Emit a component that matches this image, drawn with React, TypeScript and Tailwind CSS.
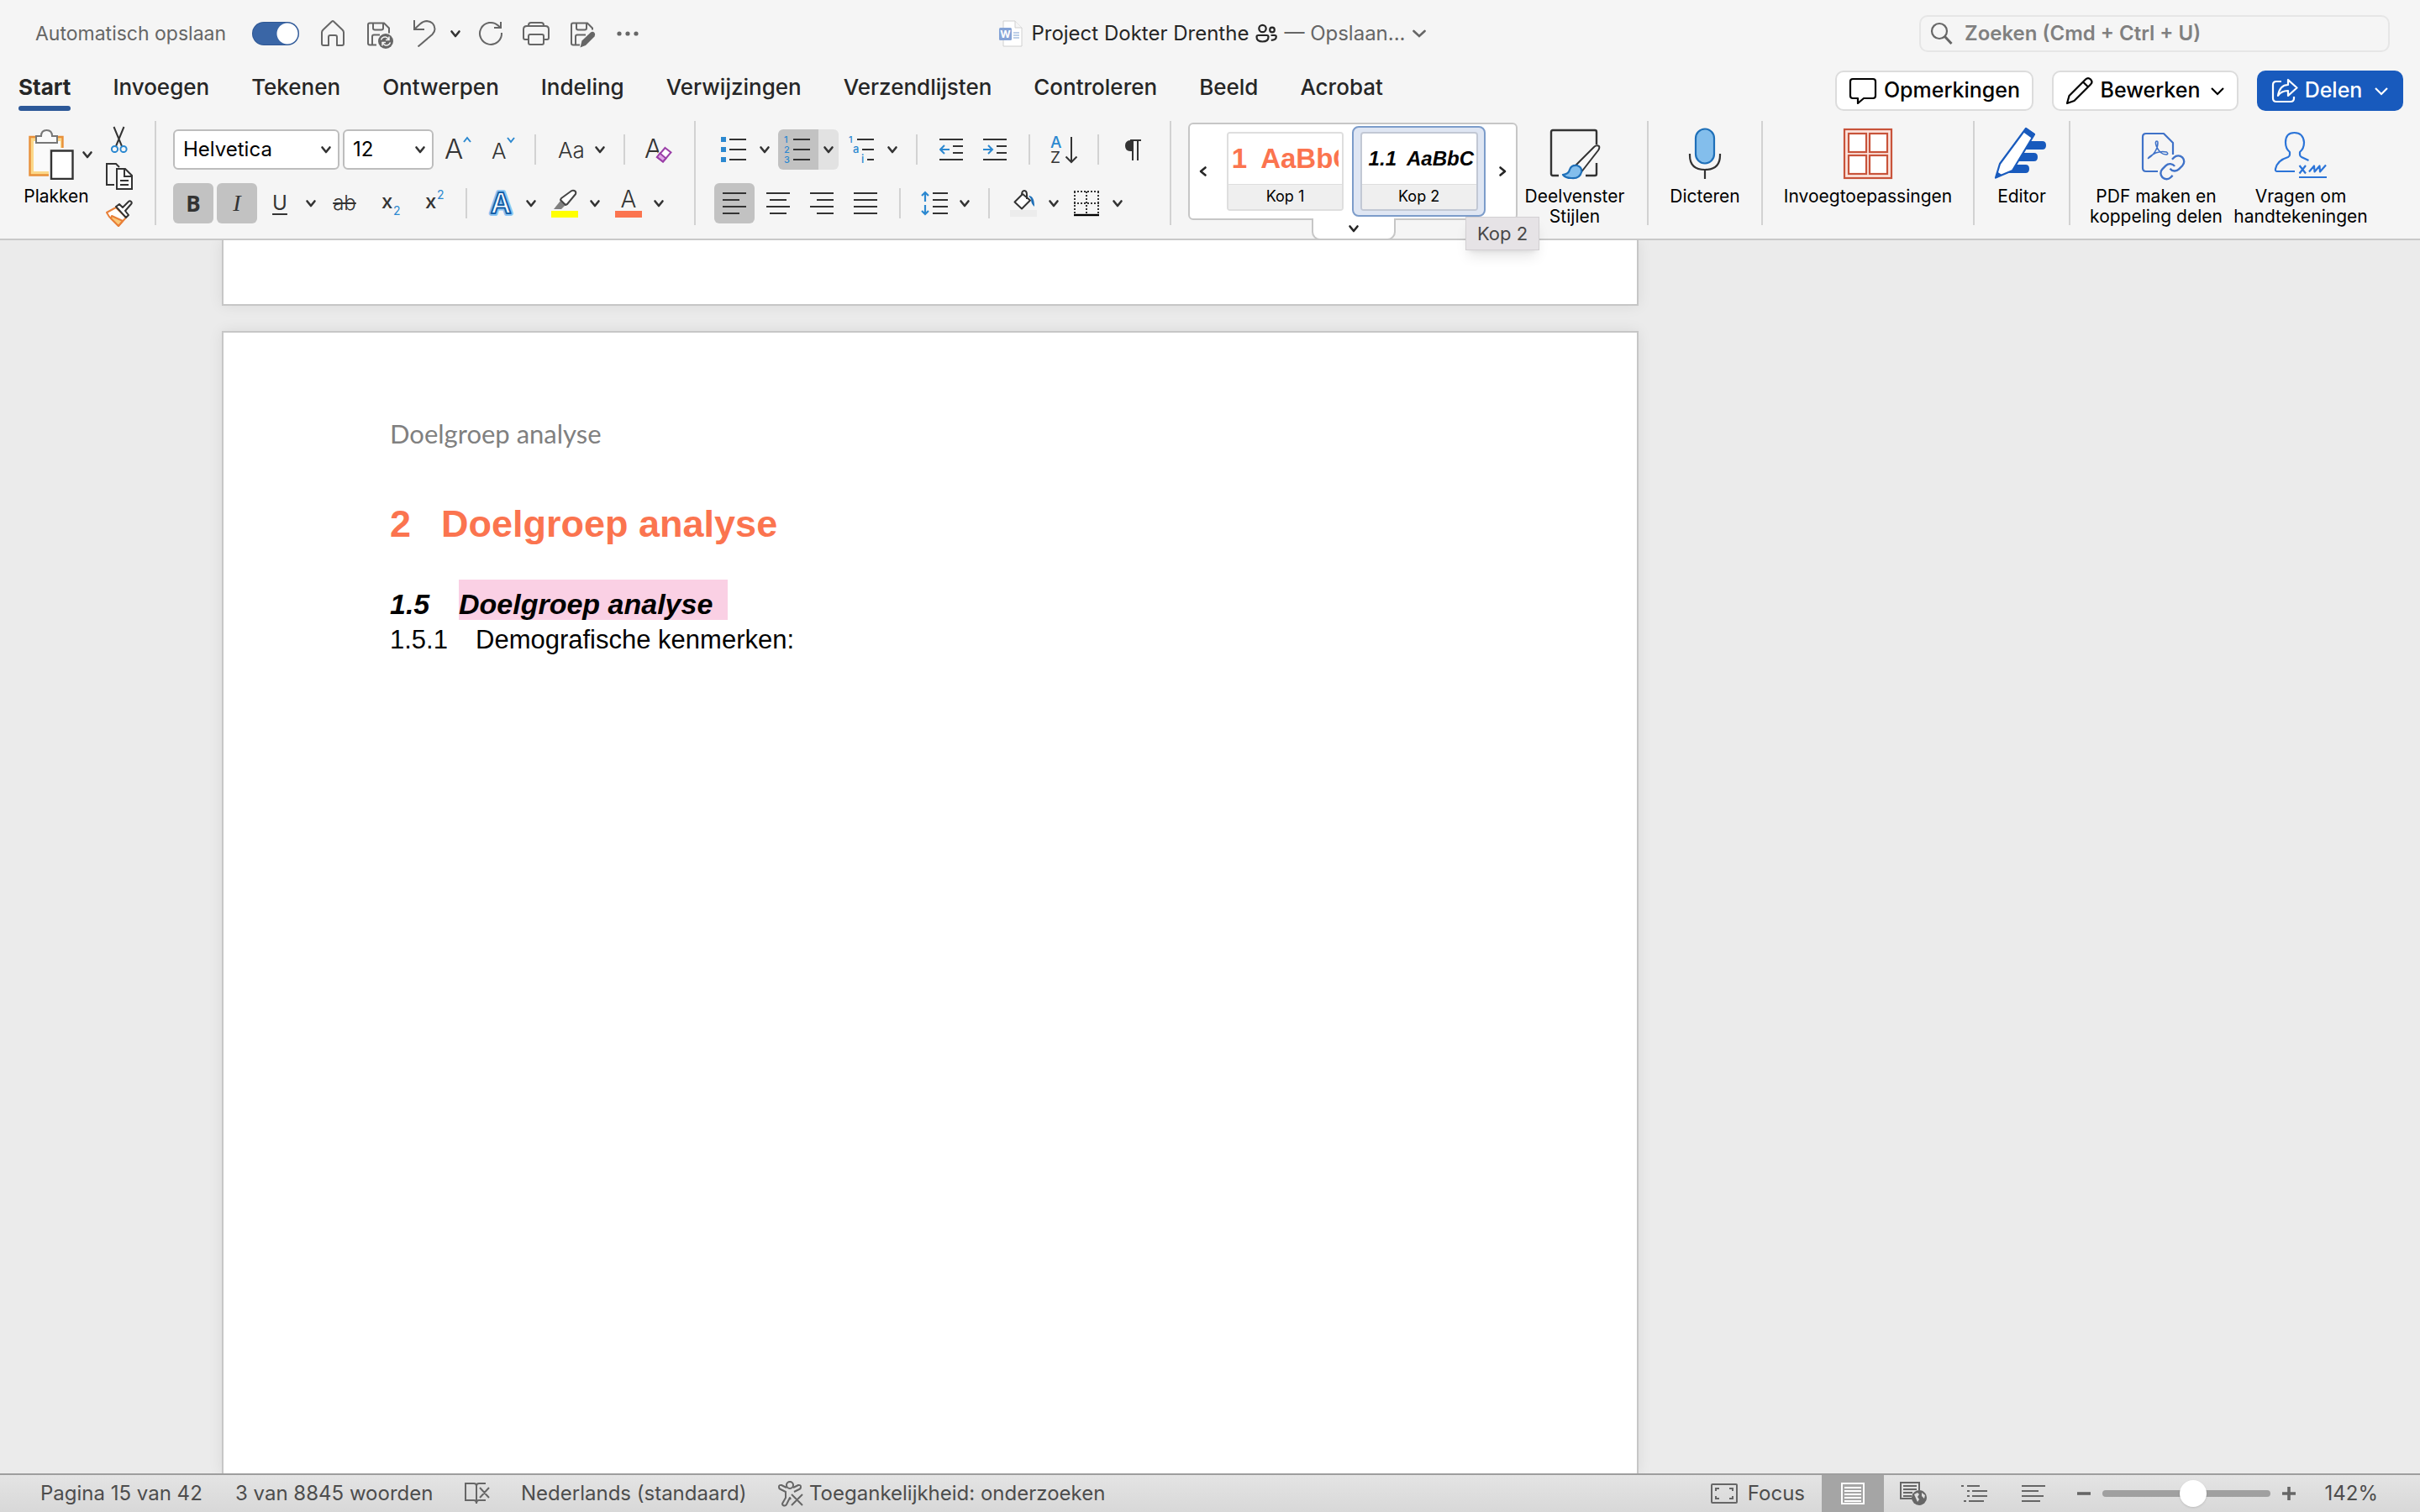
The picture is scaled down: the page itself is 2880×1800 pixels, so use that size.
import type { ReactNode } from 'react';

const tabs = ['Start', 'Invoegen', 'Tekenen', 'Ontwerpen', 'Indeling', 'Verwijzingen', 'Verzendlijsten', 'Controleren', 'Beeld', 'Acrobat'];

function Chevron({ className = '' }: { className?: string }) {
  return (
    <svg viewBox="0 0 16 16" className={`size-4 shrink-0 ${className}`} fill="none" stroke="currentColor" strokeWidth="2.6" strokeLinecap="round" strokeLinejoin="round">
      <path d="M3.5 5.5 8 11l4.5-5.5" />
    </svg>
  );
}

function Tool({ label, className = '', children }: { label: string; className?: string; children: ReactNode }) {
  return (
    <button type="button" aria-label={label} className={`flex h-12 shrink-0 items-center justify-center ${className}`}>
      {children}
    </button>
  );
}

function Drop({ label, className = '' }: { label: string; className?: string }) {
  return (
    <button type="button" aria-label={label} className={`flex h-12 w-4 shrink-0 items-center justify-center ${className}`}>
      <Chevron />
    </button>
  );
}

function Divider({ className = '' }: { className?: string }) {
  return <div className={`h-9 w-0.5 shrink-0 bg-[#d2d2d2] ${className}`} />;
}

function GroupDivider({ className = '' }: { className?: string }) {
  return <div className={`h-[124px] w-0.5 shrink-0 bg-[#d2d2d2] ${className}`} />;
}

function BigTool({ label, className = '', children }: { label: string; className?: string; children: ReactNode }) {
  return (
    <button type="button" className={`flex shrink-0 flex-col items-center gap-2 pt-2 text-[21px] leading-6 text-black ${className}`}>
      {children}
      <span className="text-center whitespace-pre">{label}</span>
    </button>
  );
}

function Lines({ rows }: { rows: [number, number][] }) {
  return (
    <svg viewBox="0 0 28 28" className="size-7" stroke="#333" strokeWidth="2">
      {rows.map(([from, to], i) => (
        <path key={i} d={`M${from} ${2 + i * 8}H${to}`} />
      ))}
    </svg>
  );
}

function TitleBar() {
  return (
    <div className="grid h-20 grid-cols-[1fr_auto_1fr] items-center pr-9 pl-[42px] text-[#666]">
      <div className="flex items-center">
        <label className="flex w-[314px] items-center justify-between text-[23px] whitespace-nowrap">
          Automatisch opslaan
          <input
            type="checkbox"
            role="switch"
            defaultChecked
            className="h-7 w-14 appearance-none rounded-full bg-[#3a66a6] bg-[radial-gradient(circle_at_42px_14px,white_12px,transparent_13px)] ring-1 ring-[#2f5793] ring-inset"
          />
        </label>
        <button type="button" aria-label="Start" className="ml-[26px]">
          <svg viewBox="0 0 28 32" className="h-8 w-7" fill="none" stroke="currentColor" strokeWidth="2" strokeLinejoin="round">
            <path d="M13 1.5q1-.9 2 0L25.500 11.500q1.500 1.500 1.500 3V28q0 2-2 2h-6V20q0-2-2-2h-6q-2 0-2 2v10H3q-2 0-2-2V14.500q0-1.500 1.500-3Z" />
          </svg>
        </button>
        <button type="button" aria-label="Opslaan" className="ml-[26px]">
          <svg viewBox="0 -1.5 32 32" className="size-8 overflow-visible" fill="none" stroke="currentColor" strokeWidth="2">
            <path d="M12 28H4q-2 0-2-2V4q0-2 2-2h17l6 6v6M8 2v6q0 2 2 2h8q2 0 2-2V2M7 28V18q0-2 2-2h7" />
            <circle cx="23" cy="23.500" r="9" fill="currentColor" stroke="none" />
            <path d="M17.500 22q1.500-4 5.500-3.500 2 .3 3.500 3m.5-3.500v4h-4M28.500 25q-1.500 4-5.500 3.500-2-.3-3.500-3M19 29v-4h4" stroke="#f5f5f5" strokeWidth="1.500" />
          </svg>
        </button>
        <button type="button" aria-label="Ongedaan maken" className="ml-6">
          <svg viewBox="0 0 28 32" className="h-8 w-7" fill="none" stroke="currentColor" strokeWidth="2">
            <path d="M1 0v11h12M1.500 10.500 8 4.500q4-3.500 8-3.500 9 1 9.500 9.500 0 3.500-3 6.500L5.500 31.500" />
          </svg>
        </button>
        <button type="button" aria-label="Meer ongedaan maken" className="ml-3.5 text-[#333]">
          <Chevron />
        </button>
        <button type="button" aria-label="Opnieuw" className="ml-5">
          <svg viewBox="0 0 28 28" className="size-7 overflow-visible" fill="none" stroke="currentColor" strokeWidth="2">
            <path d="M27 13A13 13 0 1 1 23 4.500L25.500 7M26 0v7h-8" />
          </svg>
        </button>
        <button type="button" aria-label="Afdrukken" className="ml-6">
          <svg viewBox="0 0 32 28" className="h-7 w-8" fill="none" stroke="currentColor" strokeWidth="2" strokeLinejoin="round">
            <path d="M7 21H3q-2 0-2-2V9q0-4 4-4h22q4 0 4 4v10q0 2-2 2h-4M7 5V4q0-3 3-3h12q3 0 3 3v1" />
            <rect x="7" y="15" width="18" height="12" rx="2" />
          </svg>
        </button>
        <button type="button" aria-label="Opslaan als" className="ml-6">
          <svg viewBox="0 -1.5 32 32" className="size-8 overflow-visible" fill="none" stroke="currentColor" strokeWidth="2">
            <path d="M12 28H4q-2 0-2-2V4q0-2 2-2h17l6 6v2M8 2v6q0 2 2 2h8q2 0 2-2V2M7 28V18q0-2 2-2h10" />
            <path d="m12.500 31 2-8L25 13q2.500-1.500 4.500.5 1.500 2 0 4.500L19 28.500Z" fill="currentColor" stroke="none" />
          </svg>
        </button>
        <button type="button" aria-label="Meer" className="ml-6">
          <svg viewBox="0 0 26 26" className="size-[26px]" fill="currentColor">
            <circle cx="3" cy="13" r="2.600" />
            <circle cx="13" cy="13" r="2.600" />
            <circle cx="23" cy="13" r="2.600" />
          </svg>
        </button>
      </div>

      <div className="flex items-center gap-2 text-2xl whitespace-nowrap">
        <svg viewBox="0 0 28 32" className="mr-0.5 h-8 w-7">
          <path d="M5 1h14l8 8v22H5Z" fill="#fff" stroke="#d0d0d0" />
          <path d="M19 1v8h8" fill="#f5f5f5" stroke="#d0d0d0" />
          <path d="M17 15h7M17 18h7M17 21h7" stroke="#7f9fd0" strokeWidth="1.200" />
          <rect x="0" y="9" width="15" height="15" rx="1.500" fill="#85a3d6" />
          <text x="7.500" y="21" textAnchor="middle" fontSize="12" fontWeight="700" fill="#fff">W</text>
        </svg>
        <span className="text-[#262626]">Project Dokter Drenthe</span>
        <svg viewBox="0 0 26 24" className="h-6 w-[26px] text-[#262626]" fill="none" stroke="currentColor" strokeWidth="2.200">
          <circle cx="8.500" cy="6" r="4.200" />
          <circle cx="20" cy="7.500" r="2.800" />
          <path d="M3.500 14h10q2 0 2 2 0 5.500-7 5.500t-7-5.500q0-2 2-2ZM18.500 14h4.500q1.800 0 1.800 1.800 0 4-6 4" />
        </svg>
        <span>— Opslaan...</span>
        <svg viewBox="0 0 16 16" className="size-4" fill="none" stroke="currentColor" strokeWidth="2.600" strokeLinecap="round">
          <path d="m1.500 5 6.500 6 6.500-6" />
        </svg>
      </div>

      <label className="flex h-11 w-[560px] items-center justify-self-end rounded-[10px] border-2 border-[#e6e6e6] pl-2.5">
        <svg viewBox="0 0 28 28" className="size-7 shrink-0" fill="none" stroke="currentColor" strokeWidth="2.200">
          <circle cx="12" cy="11" r="9" />
          <path d="m18.500 17.500 8 8.500" strokeWidth="3" />
        </svg>
        <input
          type="search"
          aria-label="Zoeken"
          placeholder="Zoeken (Cmd + Ctrl + U)"
          className="ml-3.5 min-w-0 flex-1 bg-transparent text-2xl font-semibold outline-none placeholder:text-[#808080]"
        />
      </label>
    </div>
  );
}

function TabBar() {
  return (
    <div className="flex h-16 justify-between pr-5 pl-[22px]">
      <nav className="flex gap-[50px] pt-2 text-[26px] leading-8 font-medium text-[#262626]">
        {tabs.map((tab) => (
          <a key={tab} href="#" className="flex flex-col gap-1.5">
            <span className={tab === 'Start' ? 'font-bold' : ''}>{tab}</span>
            {tab === 'Start' && <span className="h-1.5 rounded-full bg-[#2c5898]" />}
          </a>
        ))}
      </nav>
      <div className="flex gap-[22px] pt-1 text-[25px] font-medium text-black">
        <button type="button" className="flex h-12 w-[236px] items-center justify-center gap-2 rounded-[10px] border-2 border-[#dcdcdc] bg-white">
          <svg viewBox="0 0 34 32" className="h-8 w-[34px]" fill="none" stroke="currentColor" strokeWidth="2.200" strokeLinejoin="round">
            <path d="M5 2h24q3 0 3 3v17q0 3-3 3H18l-7 6v-6H5q-3 0-3-3V5q0-3 3-3Z" />
          </svg>
          Opmerkingen
        </button>
        <button type="button" className="flex h-12 w-[222px] items-center justify-center gap-2 rounded-[10px] border-2 border-[#dcdcdc] bg-white">
          <svg viewBox="0 0 34 34" className="size-[34px]" fill="none" stroke="currentColor" strokeWidth="2.200" strokeLinejoin="round">
            <path d="m2 32 2.500-9L24 3.500q3-3 6 0t0 6L10.500 29ZM21 6.500l6 6" />
          </svg>
          Bewerken
          <svg viewBox="0 0 18 18" className="ml-1 size-[18px]" fill="none" stroke="currentColor" strokeWidth="2.200">
            <path d="m2 6 7 7 7-7" />
          </svg>
        </button>
        <button type="button" className="flex h-12 w-[174px] items-center justify-center gap-2 rounded-[10px] bg-[#185abd] text-white">
          <svg viewBox="0 0 32 30" className="h-[30px] w-8" fill="none" stroke="currentColor" strokeWidth="2.200" strokeLinejoin="round">
            <path d="M12 4H6Q2 4 2 8v16q0 4 4 4h17q4 0 4-4v-2" />
            <path d="M20 2v6q-10 0-12 13 4-6 12-6v6l10.500-9.500Z" />
          </svg>
          Delen
          <svg viewBox="0 0 18 18" className="ml-1.5 size-[18px]" fill="none" stroke="currentColor" strokeWidth="2.200">
            <path d="m2 6 7 7 7-7" />
          </svg>
        </button>
      </div>
    </div>
  );
}

function ClipboardGroup() {
  return (
    <>
      <button type="button" className="flex w-[90px] shrink-0 flex-col items-center gap-2 pt-2.5 text-[21px] leading-6 text-black">
        <span className="flex items-center gap-2 pl-3 text-[#333]">
          <svg viewBox="0 0 54 60" className="h-[60px] w-[54px]" fill="none">
            <path d="M2 10h38v44H2Z" fill="#fbd88a" />
            <path d="M6 14h32v36H6Z" fill="#fafafa" />
            <path d="M10 9H1.500v45.500H25M31 9h9.500v15" stroke="#e8903a" strokeWidth="2.400" />
            <path d="M9 16V8h6q0-7 6.500-7T28 8h6v8Z" fill="#fafafa" stroke="#777" strokeWidth="2" />
            <path d="M24 22h32v38H24Z" fill="#f5f5f5" />
            <path d="M27 25.500h25.500V59H27Z" fill="#fff" stroke="#333" strokeWidth="2.400" />
          </svg>
          <Chevron />
        </span>
        Plakken
      </button>
      <div className="ml-3.5 flex flex-col gap-3 pt-1.5">
        <button type="button" aria-label="Knippen">
          <svg viewBox="0 0 32 32" className="size-8" fill="none" strokeWidth="2">
            <path d="m9.500 1 9.500 23M21.500 1 12 24" stroke="#333" />
            <circle cx="10.500" cy="27.500" r="3.600" stroke="#2b88d0" />
            <circle cx="21" cy="27.500" r="3.600" stroke="#2b88d0" />
          </svg>
        </button>
        <button type="button" aria-label="Kopiëren">
          <svg viewBox="0 0 32 32" className="size-8" fill="none" stroke="#333" strokeWidth="2">
            <path d="M10 26H1V1h11l4 4" />
            <path d="M13 7h10l8 8v16H13Z" fill="#fafafa" />
            <path d="M22 7v9h9M17 21h10M17 26h10" />
          </svg>
        </button>
        <button type="button" aria-label="Opmaak kopiëren">
          <svg viewBox="0 0 32 32" className="size-8" fill="none" strokeWidth="2" strokeLinejoin="round">
            <path d="m12 9-11 6 3 5 11 11 9-10Z" fill="#fff" stroke="#e8803a" />
            <path d="m7 19 13 6-5 6-9-9Z" fill="#fbc878" stroke="#e8803a" />
            <path d="m12 8 12 13 3-3-4-5 7-8q1.500-1.500 0-3t-3 0l-7 7-4-4Z" fill="#fff" stroke="#333" />
          </svg>
        </button>
      </div>
    </>
  );
}

function FontGroup() {
  return (
    <div className="flex shrink-0 flex-col gap-4 pt-2.5 text-[#333]">
      <div className="flex items-center">
        <div className="relative mr-1">
          <select aria-label="Lettertype" className="h-12 w-[198px] appearance-none rounded-md border-2 border-[#bdbdbd] bg-white pl-2.5 text-2xl text-black">
            <option>Helvetica</option>
          </select>
          <Chevron className="pointer-events-none absolute top-4 right-2" />
        </div>
        <div className="relative">
          <select aria-label="Tekengrootte" className="h-12 w-[108px] appearance-none rounded-md border-2 border-[#bdbdbd] bg-white pl-2.5 text-2xl text-black">
            <option>12</option>
          </select>
          <Chevron className="pointer-events-none absolute top-4 right-2" />
        </div>
        <Tool label="Lettertype vergroten" className="ml-3.5">
          <svg viewBox="0 0 32 32" className="size-8 overflow-visible" fill="none">
            <text x="-1" y="27" fontSize="33" fontWeight="300" fill="#333">A</text>
            <path d="m22 7 4-5 4 5" stroke="#2b88d0" strokeWidth="2" />
          </svg>
        </Tool>
        <Tool label="Lettertype verkleinen" className="ml-6">
          <svg viewBox="0 0 28 32" className="h-8 w-7 overflow-visible" fill="none">
            <text x="-1" y="27" fontSize="26" fontWeight="300" fill="#333">A</text>
            <path d="m18 2 4 5 4-5" stroke="#2b88d0" strokeWidth="2" />
          </svg>
        </Tool>
        <Divider className="mr-6 ml-[22px]" />
        <Tool label="Hoofdlettergebruik" className="w-9 text-[26px] font-light">Aa</Tool>
        <Drop label="Hoofdlettergebruik kiezen" className="ml-2" />
        <Divider className="mx-5" />
        <Tool label="Opmaak wissen">
          <svg viewBox="0 0 38 34" className="h-[34px] w-[38px] overflow-visible" fill="none">
            <text x="3" y="27" fontSize="31" fontWeight="300" fill="#333">A</text>
            <path d="M17 23 27 13l9 7-10 12-9-7Z" fill="#f5f5f5" />
            <path d="m27.500 15 7 5.500-9.500 11-7-5.500Z" fill="#fff" stroke="#9b3fa8" strokeWidth="2" />
            <path d="m21.500 21.500 7 6-3.500 4-7-5.500Z" fill="#dfa6e6" stroke="#9b3fa8" strokeWidth="2" />
          </svg>
        </Tool>
      </div>
      <div className="flex items-center">
        <Tool label="Vet" className="w-12 rounded-md bg-[#c2c2c2] font-['Open_Sans'] text-[26px] font-bold">B</Tool>
        <Tool label="Cursief" className="ml-1 w-12 rounded-md bg-[#c2c2c2] font-['Liberation_Serif'] text-[28px] italic">I</Tool>
        <Tool label="Onderstrepen" className="ml-[18px] w-[18px] text-2xl underline decoration-2 underline-offset-4">U</Tool>
        <Drop label="Onderstreping kiezen" className="ml-5" />
        <Tool label="Doorhalen" className="ml-4 w-8 text-2xl font-light line-through decoration-2">ab</Tool>
        <Tool label="Subscript" className="ml-7">
          <svg viewBox="0 0 26 32" className="h-8 w-[26px] overflow-visible">
            <text x="0" y="22" fontSize="24" fontWeight="500" fill="#333">x</text>
            <text x="14" y="30" fontSize="14" fill="#2b88d0">2</text>
          </svg>
        </Tool>
        <Tool label="Superscript" className="ml-[26px]">
          <svg viewBox="0 0 26 32" className="h-8 w-[26px] overflow-visible">
            <text x="0" y="22" fontSize="24" fontWeight="500" fill="#333">x</text>
            <text x="14" y="11" fontSize="14" fill="#2b88d0">2</text>
          </svg>
        </Tool>
        <Divider className="mx-[22px]" />
        <Tool label="Teksteffecten">
          <svg viewBox="0 0 36 36" className="size-9 overflow-visible" strokeLinejoin="round">
            <text x="18" y="30" textAnchor="middle" fontSize="34" fontWeight="600" fill="none" stroke="#8cc4f2" strokeWidth="6">A</text>
            <text x="18" y="30" textAnchor="middle" fontSize="34" fontWeight="600" fill="#fff" stroke="#1560a8" strokeWidth="2">A</text>
          </svg>
        </Tool>
        <Drop label="Teksteffecten kiezen" className="ml-2.5" />
        <Tool label="Markeringskleur" className="ml-4">
          <svg viewBox="0 0 32 34" className="h-[34px] w-8" fill="none">
            <path d="M0 26h32v8H0Z" fill="#ff0" />
            <path d="m11 14-8 10h9l5-5Z" fill="#808080" />
            <path d="m11 13 6 6 2-1 10-12q1-3-1.500-4T23 3L12 11Z" fill="#fff" stroke="#444" strokeWidth="2" strokeLinejoin="round" />
          </svg>
        </Tool>
        <Drop label="Markeringskleur kiezen" className="ml-3" />
        <Tool label="Tekstkleur" className="ml-4">
          <svg viewBox="0 0 32 34" className="h-[34px] w-8 overflow-visible">
            <text x="16" y="22" textAnchor="middle" fontSize="28" fontWeight="300" fill="#333">A</text>
            <path d="M0 26h32v8H0Z" fill="#fb744f" />
          </svg>
        </Tool>
        <Drop label="Tekstkleur kiezen" className="ml-3" />
      </div>
    </div>
  );
}

function ParagraphGroup() {
  return (
    <div className="flex shrink-0 flex-col gap-4 pt-2.5 text-[#333]">
      <div className="flex items-center">
        <Tool label="Opsommingstekens" className="ml-1.5">
          <svg viewBox="0 0 34 32" className="h-8 w-[34px]">
            <path d="M2 1h6v6H2ZM2 13h6v6H2ZM2 25h6v6H2Z" fill="#2b88d0" />
            <path d="M12 4h20M12 16h20M12 28h20" stroke="#333" strokeWidth="2" />
          </svg>
        </Tool>
        <Drop label="Opsommingsteken kiezen" className="ml-3" />
        <Tool label="Nummering" className="ml-2 w-12 rounded-l-md bg-[#c2c2c2]">
          <svg viewBox="0 0 34 34" className="size-[34px] overflow-visible">
            <text x="0" y="9" fontSize="11" fontWeight="500" fill="#2b88d0">1</text>
            <text x="0" y="21" fontSize="11" fontWeight="500" fill="#2b88d0">2</text>
            <text x="0" y="33" fontSize="11" fontWeight="500" fill="#2b88d0">3</text>
            <path d="M11 5h20M11 17h20M11 29h20" stroke="#333" strokeWidth="2" />
          </svg>
        </Tool>
        <button type="button" aria-label="Nummering kiezen" className="flex h-12 w-6 items-center justify-center rounded-r-md bg-[#e2e2e2]">
          <Chevron />
        </button>
        <Tool label="Lijst met meerdere niveaus" className="ml-3">
          <svg viewBox="0 0 32 34" className="h-[34px] w-8 overflow-visible">
            <text x="0" y="9" fontSize="11" fontWeight="500" fill="#2b88d0">1</text>
            <text x="5" y="21" fontSize="13" fontWeight="500" fill="#2b88d0">a</text>
            <text x="15" y="33" fontSize="13" fontWeight="500" fill="#2b88d0">i</text>
            <path d="M10 5h20M16 17h14M22 29h8" stroke="#333" strokeWidth="2" />
          </svg>
        </Tool>
        <Drop label="Lijstniveau kiezen" className="ml-3" />
        <Divider className="mx-5" />
        <Tool label="Inspringing verkleinen" className="ml-1.5">
          <svg viewBox="0 0 28 28" className="size-7" fill="none" strokeWidth="2">
            <path d="M0 2h28M16 10h12M16 18h12M0 26h28" stroke="#333" />
            <path d="M12 14H1M6 9l-5 5 5 5" stroke="#2b88d0" />
          </svg>
        </Tool>
        <Tool label="Inspringing vergroten" className="ml-6">
          <svg viewBox="0 0 28 28" className="size-7" fill="none" strokeWidth="2">
            <path d="M0 2h28M16 10h12M16 18h12M0 26h28" stroke="#333" />
            <path d="M0 14h11M6 9l5 5-5 5" stroke="#2b88d0" />
          </svg>
        </Tool>
        <Divider className="mr-6 ml-[26px]" />
        <Tool label="Sorteren">
          <svg viewBox="0 0 32 34" className="h-[34px] w-8 overflow-visible" fill="none">
            <text x="0" y="15" fontSize="19" fontWeight="500" fill="#2b88d0">A</text>
            <text x="0" y="33" fontSize="19" fontWeight="400" fill="#333">Z</text>
            <path d="M25 2v30M18.500 25.500 25 32l6.500-6.500" stroke="#333" strokeWidth="2" />
          </svg>
        </Tool>
        <Divider className="mx-6" />
        <Tool label="Alinea-eindes weergeven" className="ml-1.5">
          <svg viewBox="0 0 20 26" className="h-[26px] w-5">
            <path d="M9 2H7q-6 .5-6 6.500T7 15h2Z" fill="#333" />
            <path d="M7 2h13M10 2v24M16 2v24" stroke="#333" strokeWidth="2" />
          </svg>
        </Tool>
      </div>
      <div className="flex items-center">
        <Tool label="Links uitlijnen" className="w-12 rounded-md bg-[#c2c2c2]">
          <Lines rows={[[0, 28], [0, 20], [0, 28], [0, 20]]} />
        </Tool>
        <Tool label="Centreren" className="ml-3.5">
          <Lines rows={[[0, 28], [4, 24], [0, 28], [4, 24]]} />
        </Tool>
        <Tool label="Rechts uitlijnen" className="ml-6">
          <Lines rows={[[0, 28], [8, 28], [0, 28], [8, 28]]} />
        </Tool>
        <Tool label="Uitvullen" className="ml-6">
          <Lines rows={[[0, 28], [0, 28], [0, 28], [0, 28]]} />
        </Tool>
        <Divider className="mr-6 ml-[26px]" />
        <Tool label="Regelafstand">
          <svg viewBox="0 0 32 30" className="h-[30px] w-8" fill="none" strokeWidth="2">
            <path d="M14 3h18M14 11h18M14 19h18M14 27h18" stroke="#333" />
            <path d="M5 2v11M1 6l4-4 4 4M5 17v11M1 24l4 4 4-4" stroke="#2b88d0" strokeWidth="2.200" />
          </svg>
        </Tool>
        <Drop label="Regelafstand kiezen" className="ml-3" />
        <Divider className="mr-6 ml-5" />
        <Tool label="Arcering">
          <svg viewBox="0 0 32 34" className="h-[34px] w-8" fill="none">
            <path d="M0 25h32v8H0Z" fill="#ececec" />
            <path d="M15 6 5.500 15.500l8.500 8 10-10Z" fill="#fff" stroke="#333" strokeWidth="2" strokeLinejoin="round" />
            <path d="M14 7q0-5 3-5t3 5v5" stroke="#333" strokeWidth="2" />
            <path d="M22 8q7 0 7 13-4-3-4-9Z" fill="#1e6fb8" />
          </svg>
        </Tool>
        <Drop label="Arcering kiezen" className="ml-3" />
        <Tool label="Randen" className="ml-4">
          <svg viewBox="0 0 30 32" className="h-8 w-[30px]" fill="none" stroke="#333" strokeWidth="2">
            <path d="M0 2h30M0 16h30M1 2v26M15 2v26M29 2v26" strokeDasharray="2 2" />
            <path d="M0 30h30" stroke="#000" strokeWidth="2.400" />
          </svg>
        </Tool>
        <Drop label="Randen kiezen" className="ml-3.5" />
      </div>
    </div>
  );
}

function StyleGallery() {
  return (
    <div className="relative mt-0.5 flex h-[116px] w-[392px] shrink-0 items-center rounded-md border-2 border-[#c6c6c6] bg-white text-[#262626]">
      <button type="button" aria-label="Vorige stijl" className="flex w-8 justify-center">
        <Chevron className="rotate-90" />
      </button>
      <button type="button" className="ml-3 flex h-[94px] w-[140px] flex-col overflow-hidden rounded border-2 border-[#dedede] bg-white">
        <span className="flex h-[60px] w-full items-center gap-4 overflow-hidden border-r-4 border-l-4 border-white font-['Liberation_Sans'] text-[33px] font-bold whitespace-nowrap text-[#fb744f]">
          <span>1</span>
          <span>AaBbC</span>
        </span>
        <span className="w-full flex-1 border-t border-[#dedede] bg-[#efefef] text-center text-lg text-black">Kop 1</span>
      </button>
      <button type="button" className="ml-2.5 flex h-[108px] w-40 items-center justify-center rounded-lg border-2 border-[#7c9cca] bg-[#dfe6f3]">
        <span className="flex h-[94px] w-[140px] flex-col overflow-hidden rounded border-2 border-[#c2c8d4] bg-white">
          <span className="flex h-[60px] w-full items-center gap-3 pl-2 font-['Liberation_Sans'] text-2xl font-bold whitespace-nowrap text-black italic">
            <span>1.1</span>
            <span>AaBbC</span>
          </span>
          <span className="w-full flex-1 border-t border-[#dedede] bg-[#efefef] text-center text-lg text-black">Kop 2</span>
        </span>
      </button>
      <button type="button" aria-label="Volgende stijl" className="ml-1 flex w-8 justify-center">
        <Chevron className="-rotate-90" />
      </button>
      <button type="button" aria-label="Alle stijlen" className="absolute -bottom-[26px] left-[145px] flex h-[26px] w-[100px] items-center justify-center rounded-b-[10px] border-2 border-t-0 border-[#c6c6c6] bg-white">
        <Chevron />
      </button>
      <div role="tooltip" className="absolute top-[110px] left-[328px] flex h-10 w-[88px] items-center justify-center border border-[#d2cfd2] bg-[#e6e3e6] text-[22px] whitespace-nowrap text-[#484848] shadow-lg">
        Kop 2
      </div>
    </div>
  );
}

function Ribbon() {
  return (
    <div className="flex h-[140px] pl-[22px]">
      <ClipboardGroup />
      <GroupDivider className="mr-5 ml-[26px]" />
      <FontGroup />
      <GroupDivider className="mr-[22px] ml-6" />
      <ParagraphGroup />
      <GroupDivider className="mr-5 ml-[34px]" />
      <StyleGallery />
      <BigTool label={'Deelvenster\nStijlen'} className="ml-2 w-[120px]">
        <svg viewBox="0 0 62 62" className="size-[62px]" fill="none" strokeLinejoin="round">
          <path d="M12 57H5q-2 0-2-2V5q0-2 2-2h50q2 0 2 2v15M57 42v13q0 2-2 2H44" stroke="#333" strokeWidth="2.400" />
          <path d="M30 47 54 23q3-3 6-1 1 2-1 5L38 54Z" fill="#f8f8f8" stroke="#333" strokeWidth="2" />
          <path d="M17 56q7-1 8-6 2-6 9-5 6 2 5 8-2 8-12 7-7 0-10-4Z" fill="#83beec" stroke="#1e6fb8" strokeWidth="2.200" />
        </svg>
      </BigTool>
      <GroupDivider className="ml-[26px]" />
      <BigTool label="Dicteren" className="w-[134px]">
        <svg viewBox="0 0 44 62" className="h-[62px] w-11" fill="none">
          <rect x="11" y="1.500" width="22" height="41" rx="11" fill="#83beec" stroke="#1e6fb8" strokeWidth="2.200" />
          <path d="M4 31v2q0 17 18 17t18-17v-2M22 50v11" stroke="#333" strokeWidth="2.200" />
        </svg>
      </BigTool>
      <GroupDivider />
      <BigTool label="Invoegtoepassingen" className="w-[250px]">
        <svg viewBox="0 0 60 62" className="h-[62px] w-[60px]" fill="#fff" stroke="#c8533a" strokeWidth="2.200">
          <rect x="2" y="2" width="56" height="58" fill="#fbe3dc" />
          <rect x="7" y="7" width="21" height="22" />
          <rect x="32" y="7" width="21" height="22" />
          <rect x="7" y="33" width="21" height="22" />
          <rect x="32" y="33" width="21" height="22" />
        </svg>
      </BigTool>
      <GroupDivider />
      <BigTool label="Editor" className="w-28">
        <svg viewBox="0 0 62 62" className="size-[62px] overflow-visible">
          <path d="M34 16h21.500q4.500 0 4.500 5t-4.500 5H28ZM26 30h19.500q4.500 0 4.500 5t-4.500 5H20ZM20 44h15.500q4.500 0 4.500 5t-4.500 5H12Z" fill="#185abd" />
          <path d="M36 1 46 8 20 51 0 59.500 5 43Z" fill="#fff" stroke="#185abd" strokeWidth="2.200" strokeLinejoin="round" />
          <path d="M36 0 47 7.500 43.500 13 32.500 5ZM2 52.500l6 4L-.5 60.500Z" fill="#185abd" />
        </svg>
      </BigTool>
      <GroupDivider />
      <BigTool label={'PDF maken en\nkoppeling delen'} className="ml-5 w-[164px]">
        <svg viewBox="-14 0 68 62" className="h-[62px] w-[68px] overflow-visible" fill="none" stroke="#3f72c8" strokeWidth="2.200" strokeLinejoin="round">
          <path d="M22 52H8q-4 0-4-4V11q0-4 4-4h21l11 11v14" />
          <path d="M10.500 36.500q7-4 10.500-12.500 2-8 0-8-3 0-.5 6.500 4.500 10 12 9.500 2.500-1 0-3-6.500-1.500-13 1-7.500 4-9 6.500Z" strokeWidth="1.600" />
          <path transform="translate(22.500 30.500) scale(1.400)" strokeWidth="1.700" d="M10 13a5 5 0 0 0 7.540.540l3-3a5 5 0 0 0-7.070-7.070l-1.720 1.710M14 11a5 5 0 0 0-7.540-.540l-3 3a5 5 0 0 0 7.070 7.070l1.710-1.710" />
        </svg>
      </BigTool>
      <BigTool label={'Vragen om\nhandtekeningen'} className="ml-2 w-[164px]">
        <svg viewBox="0 0 64 62" className="h-[62px] w-16" fill="none" stroke="#2b74d8" strokeWidth="2.200" strokeLinejoin="round">
          <path d="M25 52H4q-2.500 0-2-3Q4 39 17 35q2-1 2-3v-3q-5-4-5-11.500Q14 6 24.500 6T36 17.500Q36 25 31 29v3q0 2 2 3l8.500 4" />
          <path d="m30.500 45 7.500 9.500m0-9.500-7.500 9.500M42 52.500l6-7 .5 7 6-7 .5 7 7-8M30 59h33" />
        </svg>
      </BigTool>
    </div>
  );
}

function Document() {
  return (
    <main className="flex min-h-0 flex-1 overflow-hidden bg-[#ebebeb]">
      <div className="flex flex-1 flex-col items-center gap-[30px]">
        <div className="h-[78px] w-[1686px] shrink-0 border-2 border-t-0 border-[#c6c6c6] bg-white shadow-[0_0_16px_rgba(0,0,0,0.08)]" />
        <article className="w-[1686px] flex-1 border-2 border-b-0 border-[#c6c6c6] bg-white px-[198px] pt-[100px] font-['Liberation_Sans'] text-black shadow-[0_0_16px_rgba(0,0,0,0.08)]">
          <p className="font-[Lato] text-[31px] leading-10 text-[#808080]">Doelgroep analyse</p>
          <h1 className="mt-[60px] flex gap-9 text-[45px] leading-[56px] font-bold text-[#fb744f]">
            <span>2</span>
            <span>Doelgroep analyse</span>
          </h1>
          <h2 className="mt-[38px] flex text-[34px] leading-[38px] font-bold italic">
            <span className="w-[82px] pt-2.5">1.5</span>
            <span className="bg-[#fad0e4] pt-2.5 pr-[18px]">Doelgroep analyse</span>
          </h2>
          <h3 className="flex text-[31px] leading-[48px]">
            <span className="w-[102px]">1.5.1</span>
            <span>Demografische kenmerken:</span>
          </h3>
        </article>
      </div>
      <aside aria-label="Opmerkingen" className="w-[666px] shrink-0" />
    </main>
  );
}

function StatusBar() {
  return (
    <footer className="flex h-[46px] shrink-0 items-center border-t-2 border-[#9e9e9e] bg-linear-to-b from-[#e4e4e4] to-[#d8d8d8] pl-12 text-2xl whitespace-nowrap text-[#4d4d4d]">
      <button type="button" className="w-[232px] text-left">Pagina 15 van 42</button>
      <button type="button" className="w-[272px] text-left">3 van 8845 woorden</button>
      <button type="button" aria-label="Spelling controleren" className="w-[68px]">
        <svg viewBox="0 0 32 28" className="h-7 w-8" fill="none" stroke="#666" strokeWidth="2">
          <path d="M26 2H18q-3 0-3 3 0-3-3-3H2v20h10q3 0 3 4 0-4 3-4h8M15 4v20M19 7l11 12M30 7 19 19" />
        </svg>
      </button>
      <button type="button" className="w-[305px] text-left">Nederlands (standaard)</button>
      <button type="button" className="flex items-center gap-1.5">
        <svg viewBox="0 0 32 32" className="size-8" fill="none" stroke="#666" strokeWidth="2" strokeLinejoin="round">
          <circle cx="15" cy="6" r="4" />
          <path d="M11 9 5 6Q2 5.500 2 8t2 3l6 3v7L6 28q0 2 2 2.500t3-1.500l4-8 1 2M19 9l6-3q3-.5 3 2t-2 3l-6 3M17 17l13 13M30 17 17 30" />
        </svg>
        Toegankelijkheid: onderzoeken
      </button>

      <div className="ml-auto flex h-full items-center pr-[50px]">
        <button type="button" className="mr-5 flex items-center gap-3">
          <svg viewBox="0 0 32 24" className="h-6 w-8" fill="none" stroke="#666" strokeWidth="2">
            <rect x="1" y="1" width="30" height="22" rx="1" />
            <path d="M6 9V6h4M22 6h4v3M26 15v3h-4M10 18H6v-3" />
          </svg>
          Focus
        </button>
        <button type="button" aria-label="Afdrukweergave" className="flex h-full w-[74px] items-center justify-center bg-[#a5a5a5]">
          <svg viewBox="0 0 28 26" className="h-[26px] w-7" fill="none" stroke="#fff" strokeWidth="2">
            <rect x="1" y="1" width="26" height="24" />
            <path d="M4 6h20M4 10h20M4 14h20M4 18h20M4 22h20" />
          </svg>
        </button>
        <button type="button" aria-label="Weblay-out" className="ml-[18px]">
          <svg viewBox="0 0 34 28" className="h-7 w-[34px]" fill="none" stroke="#666" strokeWidth="2">
            <path d="M16 20H2V1h22v9M5 5h16M5 9h16M5 13h11M5 17h10" />
            <circle cx="24" cy="19" r="9" fill="#666" stroke="none" />
            <path d="m18 15 4-2 2 2-2 3 2 3-2 3ZM27 13l4 3-1 4-3-3Z" fill="#dedede" stroke="none" />
          </svg>
        </button>
        <button type="button" aria-label="Overzicht" className="ml-10">
          <svg viewBox="0 0 32 24" className="h-6 w-8" stroke="#666" strokeWidth="2">
            <path d="M0 3h3M7 3h15M7 9h3M13 9h18M7 15h3M13 15h18M3 21h3M9 21h18" />
          </svg>
        </button>
        <button type="button" aria-label="Concept" className="ml-10">
          <svg viewBox="0 0 28 24" className="h-6 w-7" stroke="#666" strokeWidth="2">
            <path d="M0 3h28M0 9h20M0 15h26M0 21h22" />
          </svg>
        </button>
        <button type="button" aria-label="Uitzoomen" className="ml-[38px]">
          <svg viewBox="0 0 16 16" className="size-4" stroke="#666" strokeWidth="3.600">
            <path d="M0 8h16" />
          </svg>
        </button>
        <input
          type="range"
          aria-label="Zoomen"
          min={0}
          max={1000}
          defaultValue={550}
          className="mx-3.5 h-2 w-[200px] appearance-none rounded-full bg-[#a0a0a0] [&::-webkit-slider-thumb]:size-8 [&::-webkit-slider-thumb]:appearance-none [&::-webkit-slider-thumb]:rounded-full [&::-webkit-slider-thumb]:bg-white [&::-webkit-slider-thumb]:shadow"
        />
        <button type="button" aria-label="Inzoomen">
          <svg viewBox="0 0 16 16" className="size-4" stroke="#666" strokeWidth="3.600">
            <path d="M0 8h16M8 0v16" />
          </svg>
        </button>
        <button type="button" className="ml-8 w-[66px] text-right">142%</button>
      </div>
    </footer>
  );
}

export default function App() {
  return (
    <div className="flex h-screen flex-col overflow-hidden font-[Inter,sans-serif]">
      <header className="relative z-10 shrink-0 border-b-2 border-[#c8c8c8] bg-[#f5f5f5]">
        <TitleBar />
        <TabBar />
        <Ribbon />
      </header>
      <Document />
      <StatusBar />
    </div>
  );
}
